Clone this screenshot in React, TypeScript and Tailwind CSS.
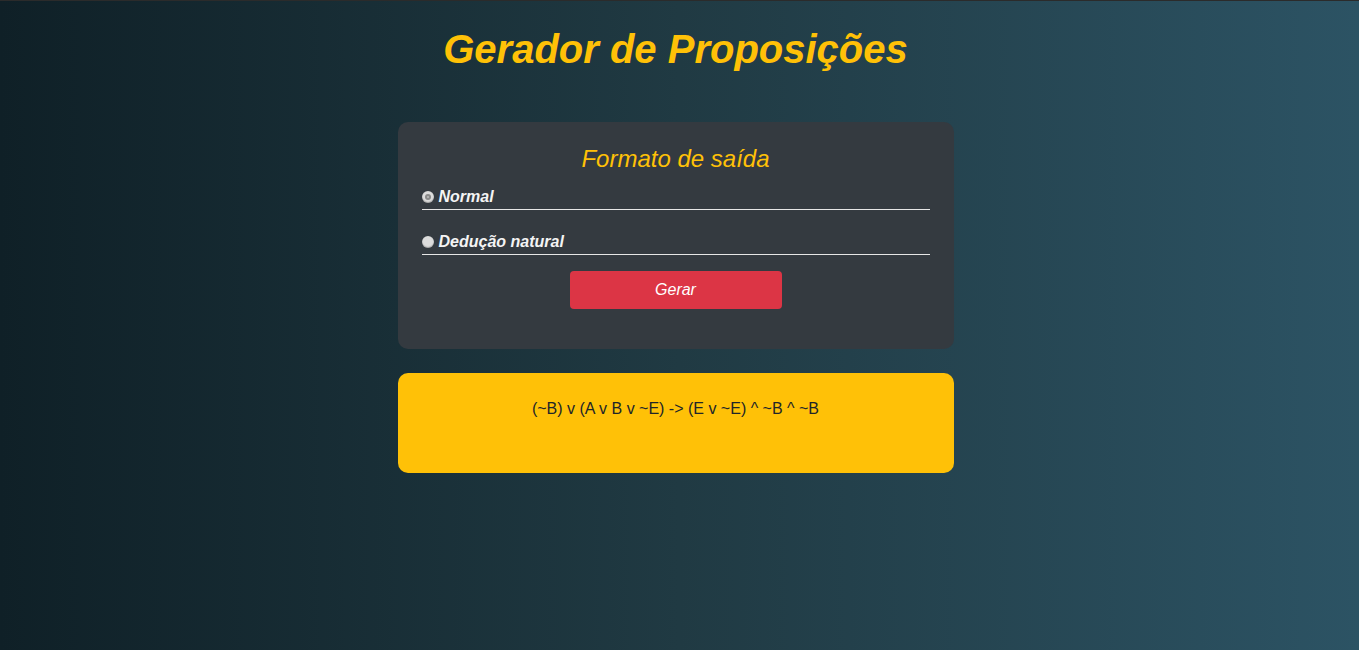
import React, { useState } from 'react';

const options = ['Normal', 'Dedução natural'];

function Radio({ checked }: { checked: boolean }) {
  return (
    <span className="w-3 h-3 rounded-full bg-[#dcdcdc] flex items-center justify-center shrink-0 shadow-[inset_0_-1px_1px_rgba(0,0,0,0.25)]">
      {checked && <span className="w-[6px] h-[6px] rounded-full bg-[#8a8a8a] flex items-center justify-center"><span className="w-[2px] h-[2px] rounded-full bg-[#bbbbbb]" /></span>}
    </span>
  );
}

export default function App() {
  const [format, setFormat] = useState(0);
  return (
    <div
      className="min-h-[650px] w-full border-t border-[#2b2b2b] bg-gradient-to-r from-[#0f2027] via-[#203a43] to-[#2c5364] flex flex-col items-center pr-2"
      style={{ fontFamily: '"Liberation Sans", Arial, sans-serif' }}
    >
      <h1 className="mt-[25px] text-[40px] leading-[46px] font-bold italic text-[#ffc107]">
        Gerador de Proposições
      </h1>

      <div className="mt-[50px] w-[556px] rounded-[10px] bg-[#343a40] px-6 pt-[23px] pb-10">
        <h2 className="text-center text-[24px] leading-7 italic text-[#ffc107]">Formato de saída</h2>
        <div className="mt-[13px] flex flex-col gap-[21px]">
          {options.map((o, i) => (
            <label
              key={o}
              onClick={() => setFormat(i)}
              className="flex items-center gap-[5px] border-b border-[#e6e6e6] pb-[2px] cursor-pointer"
            >
              <Radio checked={format === i} />
              <span className="text-base leading-[21px] font-bold italic text-[#f4f4f4]">{o}</span>
            </label>
          ))}
        </div>
        <div className="mt-4 flex justify-center">
          <button className="w-[212px] h-[38px] rounded-[4px] bg-[#dc3545] text-white italic text-base">
            Gerar
          </button>
        </div>
      </div>

      <div className="mt-6 w-[556px] h-[100px] rounded-[10px] bg-[#ffc107] pt-[27px] text-center text-base leading-[18px] text-[#212529]">
        (~B) v (A v B v ~E) -&gt; (E v ~E) ^ ~B ^ ~B
      </div>
    </div>
  );
}
